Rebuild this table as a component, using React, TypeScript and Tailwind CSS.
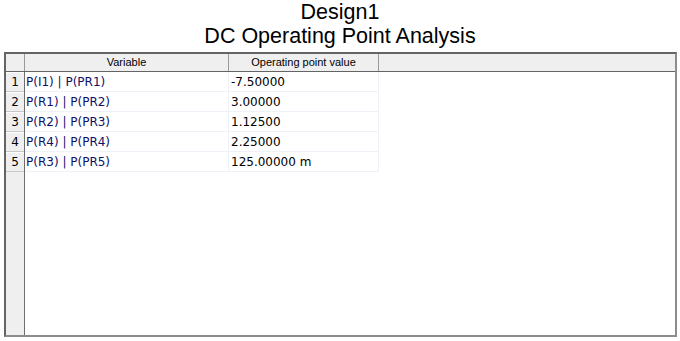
const rows: [string, string][] = [
  ['P(I1) | P(PR1)', '-7.50000'],
  ['P(R1) | P(PR2)', '3.00000'],
  ['P(R2) | P(PR3)', '1.12500'],
  ['P(R4) | P(PR4)', '2.25000'],
  ['P(R3) | P(PR5)', '125.00000 m'],
];

const cellFont = { fontFamily: 'Tahoma, "DejaVu Sans", sans-serif' };
const headFont = { fontFamily: '"Liberation Sans", Arial, sans-serif' };

export default function App() {
  return (
    <div className="w-[680px] h-[341px] bg-white overflow-hidden">
      {/* Title block */}
      <div
        className="text-center text-[21.5px] leading-[24px] text-black"
        style={{ fontFamily: '"Liberation Sans", Arial, sans-serif' }}
      >
        <div>Design1</div>
        <div>DC Operating Point Analysis</div>
      </div>

      {/* Results grid */}
      <div className="ml-[4px] mt-[4px] w-[673px] h-[285px] flex flex-col border-t-2 border-l-2 border-[#646464] border-r-2 border-r-[#8c8c8c] border-b-2 border-b-[#8c8c8c] text-black">
        {/* Header row */}
        <div className="flex h-[18px] bg-[#efefef] border-b border-[#646464] text-[11px]" style={headFont}>
          <div className="w-[19px] shrink-0 border-r border-[#9a9a9a]" />
          <div className="w-[204px] shrink-0 border-r border-[#9a9a9a] flex items-center justify-center leading-none">
            Variable
          </div>
          <div className="w-[150px] shrink-0 border-r border-[#9a9a9a] flex items-center justify-center leading-none">
            Operating point value
          </div>
          <div className="flex-1" />
        </div>

        {/* Body */}
        <div className="flex-1 flex text-[12px]" style={cellFont}>
          <div className="w-[19px] shrink-0 bg-[#efefef] border-r border-[#6e6e6e] flex flex-col">
            {rows.map((_, i) => (
              <div
                key={i}
                className="h-[20px] flex items-center justify-center border-t border-t-white border-b border-b-[#c8c8c8] leading-none"
              >
                {i + 1}
              </div>
            ))}
          </div>
          <div className="flex-1 flex flex-col">
            {rows.map(([name, value]) => (
              <div key={name} className="flex h-[20px]">
                <div className="w-[204px] shrink-0 border-r border-b border-[#eef2f8] flex items-center pl-[1px] text-[#10106a] leading-none">
                  {name}
                </div>
                <div className="w-[150px] shrink-0 border-r border-b border-[#eef2f8] flex items-center pl-[2px] leading-none">
                  {value}
                </div>
              </div>
            ))}
          </div>
        </div>
      </div>
    </div>
  );
}
